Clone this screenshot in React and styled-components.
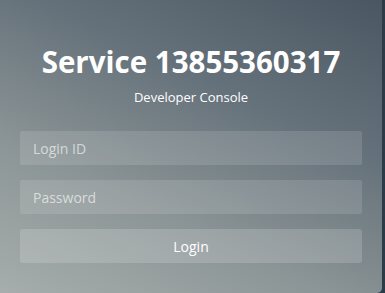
import React from "react";
import styled, { createGlobalStyle } from "styled-components";

const GlobalStyle = createGlobalStyle`
  html, body {
    margin: 0;
    padding: 0;
    background: #2c3b48;
    font-family: "Open Sans", "Liberation Sans", sans-serif;
  }
`;

const Page = styled.div`
  width: 385px;
  height: 293px;
  overflow: hidden;
`;

const Card = styled.div`
  width: 382px;
  height: 293px;
  box-sizing: border-box;
  border-radius: 0 0 5px 0;
  background: linear-gradient(205deg, #4a5661 0%, #66727b 35%, #8e9798 70%, #a6adac 100%);
  padding: 43px 20px 0;
  display: flex;
  flex-direction: column;
  align-items: center;
`;

const Title = styled.h1`
  margin: 0;
  font-size: 29.5px;
  font-weight: 700;
  color: #ffffff;
  line-height: 38px;
`;

const Subtitle = styled.div`
  margin-top: 7px;
  font-size: 13px;
  color: #ffffff;
  line-height: 18px;
`;

const Form = styled.form`
  margin-top: 25px;
  width: 100%;
  display: flex;
  flex-direction: column;
  gap: 15px;
`;

const Field = styled.input`
  box-sizing: border-box;
  width: 100%;
  height: 34px;
  border: none;
  border-radius: 2px;
  padding: 0 13px;
  background: rgba(255, 255, 255, 0.12);
  font-family: inherit;
  font-size: 14px;
  color: #fff;
  outline: none;

  &::placeholder {
    color: rgba(255, 255, 255, 0.62);
  }
`;

const Button = styled.button`
  box-sizing: border-box;
  width: 100%;
  height: 34px;
  border: none;
  border-radius: 3px;
  background: rgba(255, 255, 255, 0.16);
  font-family: inherit;
  font-size: 14px;
  color: #ffffff;
  cursor: pointer;
`;

export default function App() {
  return (
    <Page>
      <GlobalStyle />
      <Card>
        <Title>Service 13855360317</Title>
        <Subtitle>Developer Console</Subtitle>
        <Form onSubmit={(e) => e.preventDefault()}>
          <Field type="text" placeholder="Login ID" />
          <Field type="password" placeholder="Password" />
          <Button type="submit">Login</Button>
        </Form>
      </Card>
    </Page>
  );
}
